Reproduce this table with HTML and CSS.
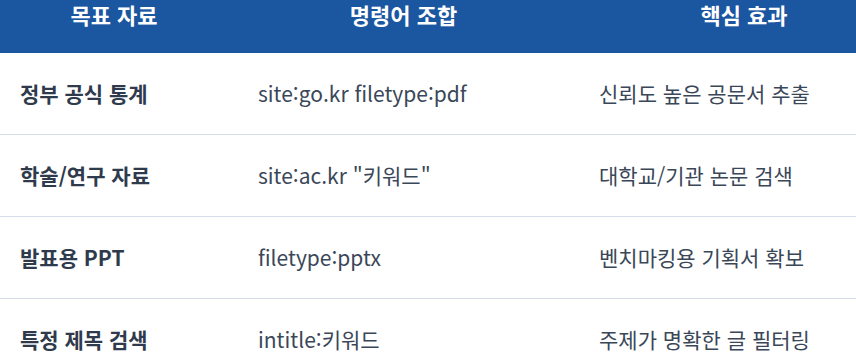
FILE: index.html
```html
<!DOCTYPE html>
<html lang="ko">
<head>
<meta charset="utf-8">
<link rel="stylesheet" href="styles.css">
</head>
<body>
<div class="wrap">
<table class="tbl">
  <colgroup><col class="c1"><col class="c2"><col class="c3"></colgroup>
  <thead>
    <tr><th>목표 자료</th><th>명령어 조합</th><th>핵심 효과</th></tr>
  </thead>
  <tbody>
    <tr><td class="name">정부 공식 통계</td><td>site:go.kr filetype:pdf</td><td>신뢰도 높은 공문서 추출</td></tr>
    <tr><td class="name">학술/연구 자료</td><td>site:ac.kr "키워드"</td><td>대학교/기관 논문 검색</td></tr>
    <tr><td class="name">발표용 PPT</td><td>filetype:pptx</td><td>벤치마킹용 기획서 확보</td></tr>
    <tr><td class="name">특정 제목 검색</td><td>intitle:키워드</td><td>주제가 명확한 글 필터링</td></tr>
  </tbody>
</table>
</div>
</body>
</html>
```
FILE: styles.css
```css
html, body { margin: 0; padding: 0; background: #fff; overflow: hidden; }
body { font-family: "Noto Sans CJK KR", "Noto Sans", sans-serif; }
.wrap { margin-top: -27px; margin-left: -5px; width: 919px; }
.tbl { width: 919px; border-collapse: collapse; table-layout: fixed; }
.c1 { width: 238px; }
.c2 { width: 341px; }
.c3 { width: 340px; }
.tbl th {
  background: #1b56a0; color: #fff; font-weight: 700; font-size: 22px;
  line-height: 24px; padding: 29px 25px 27px; text-align: center;
}
.tbl td {
  font-size: 21px; line-height: 31px; padding: 25px 25px; color: #3a4758;
  border-bottom: 1px solid #d5dde8; text-align: left; white-space: nowrap;
}
.tbl td.name { font-weight: 700; color: #2f3b4c; }
```
